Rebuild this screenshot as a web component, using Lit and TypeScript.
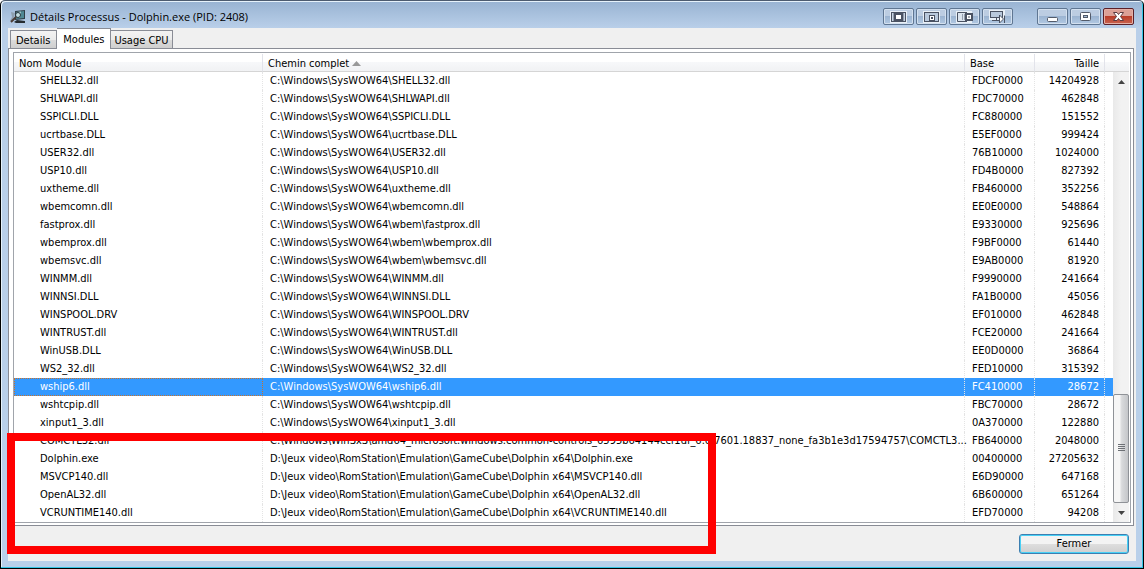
import { LitElement, html, css, svg } from "lit";
import { customElement, state } from "lit/decorators.js";

const SYS = "C:\\Windows\\SysWOW64\\";
const EMU = "D:\\Jeux video\\RomStation\\Emulation\\GameCube\\Dolphin x64\\";

type Row = [name: string, path: string, base: string, size: string];

const ROWS: Row[] = [
  ["SHELL32.dll", SYS + "SHELL32.dll", "FDCF0000", "14204928"],
  ["SHLWAPI.dll", SYS + "SHLWAPI.dll", "FDC70000", "462848"],
  ["SSPICLI.DLL", SYS + "SSPICLI.DLL", "FC880000", "151552"],
  ["ucrtbase.DLL", SYS + "ucrtbase.DLL", "E5EF0000", "999424"],
  ["USER32.dll", SYS + "USER32.dll", "76B10000", "1024000"],
  ["USP10.dll", SYS + "USP10.dll", "FD4B0000", "827392"],
  ["uxtheme.dll", SYS + "uxtheme.dll", "FB460000", "352256"],
  ["wbemcomn.dll", SYS + "wbemcomn.dll", "EE0E0000", "548864"],
  ["fastprox.dll", SYS + "wbem\\fastprox.dll", "E9330000", "925696"],
  ["wbemprox.dll", SYS + "wbem\\wbemprox.dll", "F9BF0000", "61440"],
  ["wbemsvc.dll", SYS + "wbem\\wbemsvc.dll", "E9AB0000", "81920"],
  ["WINMM.dll", SYS + "WINMM.dll", "F9990000", "241664"],
  ["WINNSI.DLL", SYS + "WINNSI.DLL", "FA1B0000", "45056"],
  ["WINSPOOL.DRV", SYS + "WINSPOOL.DRV", "EF010000", "462848"],
  ["WINTRUST.dll", SYS + "WINTRUST.dll", "FCE20000", "241664"],
  ["WinUSB.DLL", SYS + "WinUSB.DLL", "EE0D0000", "36864"],
  ["WS2_32.dll", SYS + "WS2_32.dll", "FED10000", "315392"],
  ["wship6.dll", SYS + "wship6.dll", "FC410000", "28672"],
  ["wshtcpip.dll", SYS + "wshtcpip.dll", "FBC70000", "28672"],
  ["xinput1_3.dll", SYS + "xinput1_3.dll", "0A370000", "122880"],
  [
    "COMCTL32.dll",
    "C:\\Windows\\WinSxS\\amd64_microsoft.windows.common-controls_6595b64144ccf1df_6.0.7601.18837_none_fa3b1e3d17594757\\COMCTL3...",
    "FB640000",
    "2048000",
  ],
  ["Dolphin.exe", EMU + "Dolphin.exe", "00400000", "27205632"],
  ["MSVCP140.dll", EMU + "MSVCP140.dll", "E6D90000", "647168"],
  ["OpenAL32.dll", EMU + "OpenAL32.dll", "6B600000", "651264"],
  ["VCRUNTIME140.dll", EMU + "VCRUNTIME140.dll", "EFD70000", "94208"],
];

const INK = "#4a5262";

const GLYPHS = {
  full: svg`<rect x="0" y="1" width="17" height="12" fill="#e9f0f7"/><rect x="1.500" y="2.500" width="14" height="9" fill="#c9d5e3" stroke="${INK}"/><rect x="5" y="4" width="7" height="6" fill="#fff" stroke="${INK}" stroke-width="2"/><path d="M3.500 3v8M13.500 3v8" stroke="#939dac"/>`,
  centre: svg`<rect x="0" y="1" width="17" height="12" fill="#e9f0f7"/><rect x="1.500" y="2.500" width="14" height="9" fill="#b9c9dc" stroke="${INK}"/><rect x="6.500" y="5.500" width="5" height="5" fill="#fff" stroke="${INK}"/><path d="M8 8h2" stroke="${INK}" stroke-width="2"/>`,
  side: svg`<rect x="0" y="1" width="16" height="12" fill="#e9f0f7"/><path d="M11 2.500H1.500v9H11" fill="#dbe4ee" stroke="${INK}"/><path d="M6.500 4v6M8.500 4v6" stroke="#939dac"/><rect x="10" y="4" width="6" height="6" fill="#fff" stroke="${INK}" stroke-width="2"/><path d="M12 7h2" stroke="${INK}"/>`,
  screen: svg`<rect x="0" y="0" width="16" height="10" fill="#e9f0f7"/><rect x="1.500" y="1.500" width="12" height="6" fill="#b9c9dc" stroke="${INK}"/><path d="M3 10.500h7M7.500 8v2" stroke="${INK}"/><path d="M10.500 5v8l4-4z" fill="#fff" stroke="${INK}"/><path d="M15.500 5.500v7.500" stroke="${INK}"/>`,
  min: svg`<rect x="3.500" y="7.500" width="10" height="4" rx="1" fill="#fff" stroke="#535b6a"/>`,
  max: svg`<rect x="3.500" y="2.500" width="10" height="8" rx="1" fill="#fff" stroke="#535b6a"/><rect x="6.500" y="5.500" width="4" height="2" fill="#a8bdd6" stroke="#535b6a"/>`,
  close: svg`<path d="M3.500 2.500h3.500l1.500 2 1.500-2h3.500l-3 4 3 4h-3.500l-1.500-2-1.500 2H3.500l3-4z" fill="#fff" stroke="#5b3b41"/>`,
};

@customElement("app-root")
export class AppRoot extends LitElement {
  @state() private selected = "wship6.dll";
  @state() private tab = "Modules";

  static styles = css`
    :host {
      display: block;
      font-family: "DejaVu Sans Condensed", "DejaVu Sans", sans-serif;
      font-stretch: condensed;
      font-size: 11px;
      line-height: 18px;
      color: #000;
    }
    * {
      box-sizing: border-box;
    }
    button {
      font: inherit;
      color: inherit;
      padding: 0;
      margin: 0;
    }
    .window {
      position: relative;
      display: flex;
      flex-direction: column;
      min-height: 100vh;
      border: 1px solid #000;
      border-top-color: #4d5c70;
      border-radius: 5px 5px 0 0;
      background: linear-gradient(#98b3d2, #b9cfe9 27px, #b9d0ea);
      box-shadow: inset -1px -1px #35c5e5, inset 1px 1px #e6f2fb;
      padding: 0 7px 7px;
    }
    .titlebar {
      display: flex;
      align-items: center;
      height: 27px;
      padding: 4px 2px 0;
      gap: 2px;
    }
    .title {
      flex: 1;
      margin: 0;
      padding-left: 2px;
      font-family: "Open Sans", sans-serif;
      font-stretch: normal;
      font-size: 11px;
      font-weight: 400;
    }
    .caption {
      width: 31px;
      height: 17px;
      border: 1px solid #5f7692;
      border-radius: 2px;
      background: linear-gradient(#bccde2 0 45%, #9ab3d0 46%, #b2c9e3);
      box-shadow: inset 0 0 0 1px #d3e0ef;
      display: grid;
      place-items: center;
    }
    .gap {
      width: 20px;
    }
    .caption.close {
      border-color: #5b2028;
      background: linear-gradient(#dca096 0 45%, #b93a26 46%, #c8634f);
      box-shadow: inset 0 0 0 1px #e4b0a6;
    }
    .client {
      flex: 1;
      display: flex;
      flex-direction: column;
      background: #f0f0f0;
    }
    .tabs {
      display: flex;
      align-items: flex-end;
      height: 20px;
      padding-left: 2px;
    }
    .tab {
      height: 18px;
      padding: 0 3px;
      border: 1px solid #898c95;
      border-bottom: 0;
      border-left-width: 0;
      background: linear-gradient(#f3f3f3, #ebebeb 50%, #dcdcdc 51%, #cfcfcf);
      line-height: 19px;
    }
    .tab:first-child {
      border-left-width: 1px;
      padding: 0 6px 0 5px;
    }
    .tab.on {
      position: relative;
      height: 21px;
      margin-bottom: -1px;
      padding: 0 6px;
      background: #fff;
    }
    .pane {
      margin-right: 2px;
      border: 1px solid #898c95;
      background: #fff;
      padding: 3px 2px 2px 4px;
    }
    .list {
      display: flex;
      border: 1px solid #a0a4ab;
      padding: 1px 1px 0 0;
    }
    table {
      flex: 1;
      width: 0;
      table-layout: fixed;
      border-collapse: separate;
      border-spacing: 0;
    }
    th,
    .cap {
      height: 18px;
      padding: 3px 5px 0;
      border-bottom: 1px solid #d5d5d5;
      border-right: 1px solid #e2e3ea;
      background: linear-gradient(#fff 0 45%, #f7f8fa 46%, #f1f2f4);
      font-weight: 400;
      text-align: left;
      white-space: nowrap;
      line-height: 14px;
    }
    th:last-child,
    .cap {
      border-right: 0;
      padding: 0;
    }
    td {
      height: 18px;
      padding: 0 7px;
      border-right: 1px dotted #e4e4e4;
      white-space: nowrap;
    }
    td:first-child {
      padding-left: 26px;
    }
    td:last-child {
      border-right: 0;
      padding: 0;
    }
    td.num {
      text-align: right;
      padding-right: 5px;
    }
    th.num {
      text-align: right;
    }
    tr.on td {
      background: #3399ff;
      color: #fff;
    }
    tr.on td:first-child {
      outline: 1px dotted #c9722b;
      outline-offset: -1px;
    }
    .c-name {
      width: 249px;
    }
    .c-num {
      width: 70px;
    }
    .c-end {
      width: 8px;
    }
    .side {
      display: flex;
      flex-direction: column;
      width: 16px;
    }
    .scroll {
      flex: 1;
      display: flex;
      flex-direction: column;
      background: linear-gradient(90deg, #e9e9e9, #f2f2f2 50%);
    }
    .step {
      height: 19px;
      border: 0;
      background: none;
      display: grid;
      place-items: center;
    }
    .track {
      flex: 1;
      display: flex;
      flex-direction: column;
      justify-content: flex-end;
    }
    .thumb {
      height: 109px;
      border: 1px solid #8f9297;
      border-radius: 2px;
      background: linear-gradient(90deg, #f6f6f6 0 40%, #d9dadc 55%, #c4c6c9);
      display: grid;
      place-items: center;
    }
    .foot {
      display: flex;
      justify-content: flex-end;
      padding: 8px 7px 7px;
    }
    .ok {
      width: 110px;
      height: 20px;
      border: 1px solid #3c7fb1;
      border-radius: 3px;
      background: linear-gradient(#f3f3f3 0 48%, #dedede 50%, #cfcfcf);
      box-shadow: inset 0 0 0 1px #48d0f5;
    }
    .mark {
      position: absolute;
      left: 6px;
      top: 432px;
      width: 709px;
      height: 121px;
      border: 8px solid #f00;
      pointer-events: none;
    }
    svg {
      display: block;
    }
    .arrow {
      display: inline-block;
      vertical-align: 1px;
    }
  `;

  private caption(label: string, glyph: unknown, extra = "") {
    return html`<button class="caption ${extra}" aria-label=${label}>
      <svg width="17" height="13" viewBox="0 0 17 13">${glyph}</svg>
    </button>`;
  }

  render() {
    return html`
      <main class="window">
        <header class="titlebar">
          <svg width="16" height="16" viewBox="0 0 16 16">
            <path d="M5 2l10-1v9l-10 1z" fill="#2f3d46" />
            <path d="M6 3l8-1v7l-8 1z" fill="#4f8793" />
            <path d="M7 3l4-.5-1 6-3 .5z" fill="#a9cfd3" />
            <path d="M1 3l4 1-1 4-2 4H0l2-4z" fill="#8796a3" opacity=".8" />
            <circle cx="8" cy="6" r="2.500" fill="#c2dde0" stroke="#22323a" />
            <path d="M6 8l-5 5" stroke="#4a3b35" stroke-width="2" />
            <path d="M4 13l3-2 8 1v2l-9 0z" fill="#252c31" />
          </svg>
          <h1 class="title">Détails Processus - Dolphin.exe (PID: 2408)</h1>
          ${this.caption("Plein écran", GLYPHS.full)}
          ${this.caption("Centrer", GLYPHS.centre)}
          ${this.caption("Aligner", GLYPHS.side)}
          ${this.caption("Écran suivant", GLYPHS.screen)}
          <span class="gap"></span>
          ${this.caption("Réduire", GLYPHS.min)}
          ${this.caption("Agrandir", GLYPHS.max)}
          ${this.caption("Quitter", GLYPHS.close, "close")}
        </header>
        <section class="client">
          <nav class="tabs" role="tablist">
            ${["Details", "Modules", "Usage CPU"].map(
              (t) => html`<button
                class="tab ${t === this.tab ? "on" : ""}"
                role="tab"
                aria-selected=${t === this.tab}
                @click=${() => (this.tab = t)}
              >${t}</button>`
            )}
          </nav>
          <div class="pane">
            <div class="list">
              <table>
                <colgroup>
                  <col class="c-name" />
                  <col />
                  <col class="c-num" />
                  <col class="c-num" />
                  <col class="c-end" />
                </colgroup>
                <thead>
                  <tr>
                    <th>Nom Module</th>
                    <th>Chemin complet
                      <svg class="arrow" width="9" height="5" viewBox="0 0 9 5"><path d="M0 5l4.500-5L9 5z" fill="#999" /></svg>
                    </th>
                    <th>Base</th>
                    <th class="num">Taille</th>
                    <th></th>
                  </tr>
                </thead>
                <tbody>
                  ${ROWS.map(
                    ([name, path, base, size]) => html`<tr
                      class=${name === this.selected ? "on" : ""}
                      @click=${() => (this.selected = name)}
                    >
                      <td>${name}</td>
                      <td>${path}</td>
                      <td>${base}</td>
                      <td class="num">${size}</td>
                      <td></td>
                    </tr>`
                  )}
                </tbody>
              </table>
              <div class="side">
                <div class="cap"></div>
                <div class="scroll">
                  <button class="step" aria-label="Monter">
                    <svg width="7" height="4" viewBox="0 0 7 4"><path d="M0 4l3.500-4L7 4z" fill="#444" /></svg>
                  </button>
                  <div class="track">
                    <div class="thumb">
                      <svg width="7" height="9" viewBox="0 0 7 9"><path d="M0 .5h7M0 2.500h7M0 4.500h7M0 6.500h7" stroke="#6d7075" /></svg>
                    </div>
                  </div>
                  <button class="step" aria-label="Descendre">
                    <svg width="7" height="4" viewBox="0 0 7 4"><path d="M0 0l3.500 4L7 0z" fill="#444" /></svg>
                  </button>
                </div>
              </div>
            </div>
          </div>
          <footer class="foot"><button class="ok">Fermer</button></footer>
        </section>
        <div class="mark"></div>
      </main>
    `;
  }
}
